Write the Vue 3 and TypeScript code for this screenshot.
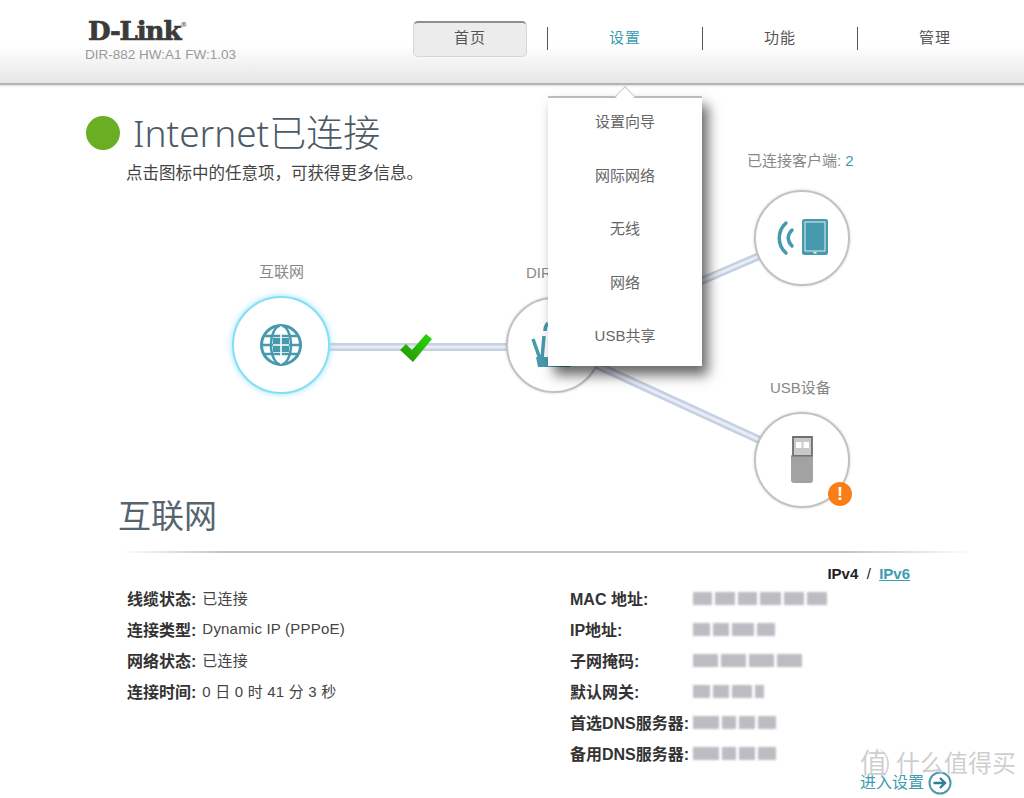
<template>
  <div class="page">
    <header class="topbar">
      <div class="brand">
        <div class="logo">D-Link<sup>®</sup></div>
        <div class="model">DIR-882 HW:A1 FW:1.03</div>
      </div>
      <nav class="nav">
        <button class="home-btn">首页</button>
        <div v-for="item in navItems" :key="item" :class="['nav-item', { active: item === '设置' }]">
          {{ item }}
        </div>
      </nav>
    </header>

    <section class="status">
      <div class="status-title">
        <span class="status-dot"></span>
        <h1>Internet已连接</h1>
      </div>
      <p class="status-hint">点击图标中的任意项，可获得更多信息。</p>
    </section>

    <div class="diagram">
      <svg class="links" width="1024" height="520" viewBox="0 0 1024 520">
        <g v-for="link in links" :key="link">
          <path :d="link" stroke="#c5d0e3" stroke-width="8" fill="none" />
          <path :d="link" stroke="#e8ecf4" stroke-width="3" fill="none" />
        </g>
      </svg>

      <div class="label label-internet">互联网</div>
      <div class="label label-router">DIR-882</div>
      <div class="label label-clients">已连接客户端: <span class="count">2</span></div>
      <div class="label label-usb">USB设备</div>

      <div class="node node-internet">
        <svg width="44" height="44" viewBox="0 0 44 44">
          <circle cx="22" cy="22" r="19.5" fill="none" stroke="#4799ad" stroke-width="3" />
          <ellipse cx="22" cy="22" rx="10" ry="19.5" fill="none" stroke="#4799ad" stroke-width="2.5" />
          <path d="M3 22h38M6 13h32M6 31h32" stroke="#4799ad" stroke-width="2.5" fill="none" />
          <path d="M14 15h16v14H14z" fill="#4799ad" />
          <path d="M22 3v38M14 22h16" stroke="#fff" stroke-width="1.6" />
        </svg>
      </div>

      <svg class="check" width="36" height="32" viewBox="0 0 36 32">
        <defs>
          <linearGradient id="checkFill" x1="1" y1="0" x2="0" y2="1">
            <stop offset="0" stop-color="#22dc05" />
            <stop offset="1" stop-color="#2b8f06" />
          </linearGradient>
        </defs>
        <path d="M2 18l6-6 6 6L28 2l6 5-19 23z" fill="url(#checkFill)" />
      </svg>

      <div class="node node-router">
        <svg width="60" height="50" viewBox="0 0 60 50">
          <path d="M9 18l7 20M18 38l2-23M21 10c0-3 1-6 3-8" stroke="#4799ad" stroke-width="3.5" fill="none" />
          <path d="M12 36h38l-4 10H14z" fill="#4799ad" />
        </svg>
      </div>

      <div class="node node-clients">
        <svg width="56" height="42" viewBox="0 0 56 42">
          <path d="M12 6C3 14 3 28 12 36M18 13c-5 5-5 11 0 16" stroke="#4799ad" stroke-width="3.5" stroke-linecap="round" fill="none" />
          <rect x="28" y="2" width="26" height="36" rx="2.5" fill="#4799ad" />
          <rect x="31" y="5" width="20" height="29" fill="#4799ad" stroke="#e2eff3" stroke-width="1" />
          <rect x="39.5" y="35" width="3" height="1.6" fill="#e2eff3" />
        </svg>
      </div>

      <div class="node node-usb">
        <svg width="24" height="48" viewBox="0 0 24 48">
          <path d="M3 1h19v19H3z" fill="#c9c9c9" stroke="#6f6f6f" stroke-width="1.8" />
          <rect x="6" y="6" width="5.5" height="6" fill="#fff" />
          <rect x="13.5" y="6" width="5.5" height="6" fill="#fff" />
          <path d="M1 20h22v24a3 3 0 0 1-3 3H4a3 3 0 0 1-3-3z" fill="#a2a2a2" />
          <path d="M1 20h22" stroke="#777" stroke-width="1.2" />
        </svg>
        <span class="badge">!</span>
      </div>
    </div>

    <div class="menu">
      <span class="menu-arrow"></span>
      <div v-for="entry in menuItems" :key="entry" class="menu-item">{{ entry }}</div>
    </div>

    <section class="details">
      <h2>互联网</h2>
      <div class="rule"></div>
      <div class="ip-switch"><b>IPv4</b>&nbsp; / &nbsp;<a>IPv6</a></div>
      <div class="columns">
        <div class="col-left">
          <div v-for="row in leftRows" :key="row.name" class="row">
            <b>{{ row.name }}:</b> <span class="value">{{ row.value }}</span>
          </div>
        </div>
        <div class="col-right">
          <div v-for="row in rightRows" :key="row.name" class="row">
            <b class="key">{{ row.name }}:</b>
            <span class="masked">
              <span
                v-for="(seg, i) in row.segments"
                :key="i"
                class="mask-seg"
                :style="{ width: seg + 'px' }"
              ></span>
            </span>
          </div>
        </div>
      </div>
    </section>

    <div class="setup-link">
      <span>进入设置</span>
      <svg width="24" height="24" viewBox="0 0 24 24">
        <circle cx="12" cy="12" r="10.5" fill="none" stroke="#4799ad" stroke-width="2" />
        <path d="M5.5 12h11M12 7l5 5-5 5" fill="none" stroke="#2f7f93" stroke-width="2.4" />
      </svg>
    </div>
    <div class="watermark">
      <span class="watermark-mark">值</span>
      <span>什么值得买</span>
    </div>
  </div>
</template>

<script setup lang="ts">
interface InfoRow {
  name: string
  value: string
}

interface MaskRow {
  name: string
  segments: number[]
}

const navItems = ['设置', '功能', '管理']
const menuItems = ['设置向导', '网际网络', '无线', '网络', 'USB共享']

const links = ['M280 347H553', 'M553 345L801 238', 'M553 345L801 459']

const leftRows: InfoRow[] = [
  { name: '线缆状态', value: '已连接' },
  { name: '连接类型', value: 'Dynamic IP (PPPoE)' },
  { name: '网络状态', value: '已连接' },
  { name: '连接时间', value: '0 日 0 时 41 分 3 秒' },
]

// 原图这些值是打码的，这里用色块代替
const rightRows: MaskRow[] = [
  { name: 'MAC 地址', segments: [19, 20, 19, 21, 20, 20] },
  { name: 'IP地址', segments: [17, 16, 22, 18] },
  { name: '子网掩码', segments: [25, 25, 25, 25] },
  { name: '默认网关', segments: [17, 16, 20, 9] },
  { name: '首选DNS服务器', segments: [26, 14, 16, 18] },
  { name: '备用DNS服务器', segments: [26, 14, 16, 18] },
]
</script>

<style>
html,
body {
  margin: 0;
  background: #fff;
}
</style>

<style scoped>
.page {
  position: relative;
  width: 1024px;
  height: 798px;
  overflow: hidden;
  background: #fff;
  font-family: "Liberation Sans", "Noto Sans CJK SC", sans-serif;
  color: #444;
}

.topbar {
  height: 85px;
  box-sizing: border-box;
  display: flex;
  align-items: flex-start;
  padding: 20px 0 0 85px;
  background: linear-gradient(#fff 0, #fff 45px, #e6e6e6 83px);
  border-bottom: 2px solid #b4b4b4;
  box-shadow: 0 1px 2px rgba(0, 0, 0, 0.15);
}

.brand {
  width: 328px;
}

.logo {
  margin-left: 3px;
  font-family: "DejaVu Serif", serif;
  font-weight: 700;
  font-size: 26px;
  line-height: 22px;
  letter-spacing: -1.1px;
  color: #3a3a3a;
  -webkit-text-stroke: 0.7px #3a3a3a;
}

.logo sup {
  font-size: 7px;
  font-weight: 400;
  letter-spacing: 0;
  vertical-align: 13px;
  line-height: 0;
  -webkit-text-stroke: 0;
}

.model {
  margin-top: 5px;
  font-size: 13.5px;
  line-height: 16px;
  color: #999;
}

.nav {
  display: flex;
  align-items: flex-start;
  margin-top: 1px;
}

.home-btn {
  width: 114px;
  height: 36px;
  padding: 0 0 6px;
  font: inherit;
  font-size: 15px;
  letter-spacing: 1px;
  color: #555;
  background: #ececec;
  border: 1px solid #d6d6d6;
  border-top: 2px solid #8f8f8f;
  border-radius: 5px;
}

.nav-item {
  width: 154px;
  height: 23px;
  margin-top: 6px;
  text-align: center;
  font-size: 15px;
  line-height: 22px;
  letter-spacing: 1px;
  color: #555;
  border-left: 1px solid #555;
}

.home-btn + .nav-item {
  margin-left: 20px;
}

.nav-item.active {
  color: #3d9bb2;
}

.status {
  padding: 23px 0 0 86px;
}

.status-title {
  display: flex;
  align-items: center;
  gap: 13px;
}

.status-dot {
  width: 34px;
  height: 34px;
  border-radius: 50%;
  background: #6aaf23;
}

.status-title h1 {
  margin: 0;
  font-family: "Noto Sans", "Noto Sans CJK SC", sans-serif;
  font-weight: 300;
  font-size: 37px;
  line-height: 50px;
  color: #4c5a66;
  white-space: nowrap;
}

.status-hint {
  margin: 5px 0 0 40px;
  font-size: 16.5px;
  line-height: 20px;
  color: #444;
}

.diagram {
  position: absolute;
  left: 0;
  top: 0;
  width: 1024px;
  height: 520px;
}

.links {
  position: absolute;
  left: 0;
  top: 0;
}

.label {
  position: absolute;
  font-size: 15px;
  line-height: 20px;
  color: #888;
  white-space: nowrap;
}

.label-internet {
  left: 259px;
  top: 262px;
}

.label-router {
  left: 526px;
  top: 263px;
}

.label-clients {
  left: 747px;
  top: 151px;
}

.label-usb {
  left: 770px;
  top: 378px;
}

.count {
  color: #3d9bb2;
}

.node {
  position: absolute;
  width: 92px;
  height: 92px;
  border-radius: 50%;
  background: #fff;
  border: 2px solid #c2c2c2;
  box-shadow: 0 0 3px rgba(0, 0, 0, 0.18);
  display: flex;
  align-items: center;
  justify-content: center;
}

.node-internet {
  left: 232px;
  top: 296px;
  width: 94px;
  height: 94px;
  border-color: #86def5;
  box-shadow: 0 0 6px #8fe3f8;
}

.node-router {
  left: 506px;
  top: 297px;
}

.node-router svg {
  margin-top: 2px;
}

.node-clients {
  left: 754px;
  top: 190px;
}

.node-usb {
  left: 754px;
  top: 412px;
}

.check {
  position: absolute;
  left: 398px;
  top: 332px;
}

.badge {
  position: absolute;
  left: 72px;
  top: 68px;
  width: 24px;
  height: 24px;
  border-radius: 50%;
  background: #fb7d17;
  color: #fff;
  font-weight: 700;
  font-size: 18px;
  line-height: 24px;
  text-align: center;
}

.menu {
  position: absolute;
  left: 548px;
  top: 96px;
  width: 154px;
  height: 268px;
  background: #fff;
  border-top: 2px solid #bbb;
  box-shadow: 6px 9px 12px rgba(0, 0, 0, 0.6);
  display: flex;
  flex-direction: column;
}

.menu-arrow {
  position: absolute;
  left: 70px;
  top: -9px;
  width: 14px;
  height: 14px;
  background: #fff;
  transform: rotate(45deg);
  border-left: 1px solid #ccc;
  border-top: 1px solid #ccc;
  box-sizing: border-box;
}

.menu-item {
  height: 53.6px;
  line-height: 48px;
  text-align: center;
  font-size: 15px;
  color: #666;
}

.details {
  position: absolute;
  left: 0;
  top: 492px;
  width: 1024px;
}

.details h2 {
  margin: 0 0 0 118px;
  font-weight: 400;
  font-size: 33px;
  line-height: 50px;
  color: #56646f;
}

.rule {
  height: 2px;
  margin: 9px 50px 0 120px;
  background: linear-gradient(90deg, rgba(190, 190, 190, 0), #c4c4c4 12%, #c4c4c4 85%, rgba(190, 190, 190, 0));
  box-shadow: 0 -8px 12px -4px rgba(0, 0, 0, 0.06);
}

.ip-switch {
  margin: 11px 114px 0 0;
  text-align: right;
  font-size: 15px;
  line-height: 20px;
  color: #222;
}

.ip-switch a {
  color: #3d9bb2;
  font-weight: 700;
  text-decoration: underline;
}

.columns {
  display: flex;
  margin-top: -2px;
}

.col-left {
  width: 443px;
  padding-left: 127px;
}

.row {
  height: 31px;
  display: flex;
  align-items: center;
  gap: 6px;
  white-space: nowrap;
}

.row b {
  font-size: 16px;
  color: #333;
}

.value {
  font-size: 15px;
  letter-spacing: 0.2px;
  color: #444;
}

.col-right .row {
  gap: 0;
}

.key {
  width: 123px;
}

.masked {
  display: flex;
  gap: 3px;
  margin-top: 2px;
  filter: blur(1.3px);
}

.mask-seg {
  height: 13px;
  background: #bcbcc2;
}

.setup-link {
  position: absolute;
  left: 860px;
  top: 771px;
  display: flex;
  align-items: center;
  gap: 4px;
  font-size: 16px;
  line-height: 24px;
  color: #3d9bb2;
}

.watermark {
  position: absolute;
  left: 860px;
  top: 748px;
  display: flex;
  align-items: center;
  gap: 7px;
  font-size: 24px;
  line-height: 30px;
  color: rgba(185, 185, 185, 0.7);
  text-shadow: 0 0 2px #fff;
  white-space: nowrap;
}

.watermark-mark {
  width: 27px;
  height: 32px;
  font-size: 27px;
  line-height: 32px;
  border-right: 2px solid rgba(185, 185, 185, 0.6);
  border-radius: 0 50% 50% 0;
}
</style>
